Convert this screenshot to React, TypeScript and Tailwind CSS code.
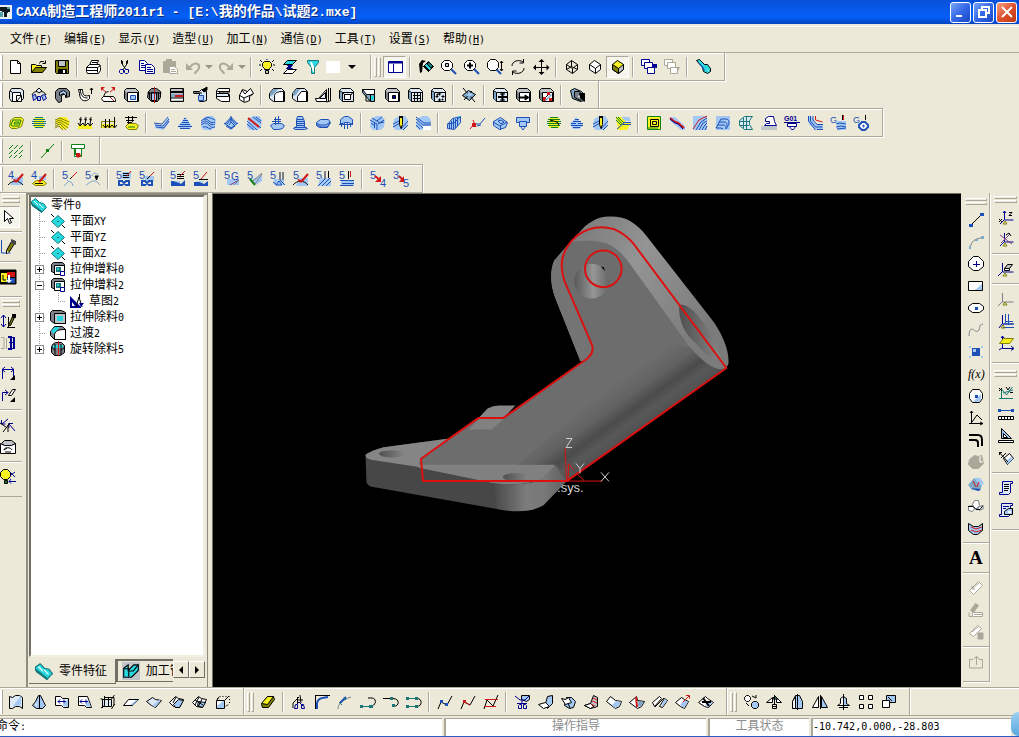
import React from "react";

/* Palette used by the compact icon notation: "<stroke><fill>[width] <path>" joined by ";". */
const INK: Record<string, string> = {
  k: "#000000", w: "#ffffff", n: "#000090", b: "#1c50b8", l: "#a4c8f4", c: "#28d8e0", t: "#187878",
  y: "#f8f020", o: "#808000", r: "#d01818", g: "#7c8088", s: "#c0c4c8", d: "#404448", e: "#108018",
  a: "#aca899", p: "#dce8f4", v: "#7fa8c8", u: "#80408c", "-": "none",
};

function Icon({ spec, className = "size-4" }: { spec: string; className?: string }) {
  return (
    <svg viewBox="0 0 16 16" className={`${className} shrink-0 overflow-visible`} aria-hidden="true">
      {spec.split(";").map((item, i) => {
        const sp = item.indexOf(" ");
        const head = item.slice(0, sp);
        const body = item.slice(sp + 1);
        if (head[0] === "T") {
          const [x, y, size, str] = body.split(" ");
          const style = head.slice(2);
          return (
            <text
              key={i} x={x} y={y} fontSize={size} fill={INK[head[1]]}
              fontFamily={style.includes("s") ? "Liberation Serif, serif" : "Liberation Sans, sans-serif"}
              fontWeight={style.includes("b") ? 700 : 400}
              fontStyle={style.includes("i") ? "italic" : "normal"}
            >
              {str}
            </text>
          );
        }
        return <path key={i} d={body} stroke={INK[head[0]]} fill={INK[head[1]]} strokeWidth={head[2] ? Number(head[2]) : 1} />;
      })}
    </svg>
  );
}

const CUBE = "ks M1.5 3.5l2-2h9l3 3v10h-11l-3-3z;-g M2 4l2 2v8l-2-2z;kw M4.5 5.5h10v9h-10z";
const CUBEP = "kp M1.5 3.5l2-2h9l3 3v10h-11l-3-3z;-v M2 4l2 2v8l-2-2z;k- M1.5 3.5l3 2h11m-11 0v9";
const FIVE = "Tb 0 8 11 5;";
const FOUR = "Tb 0 8 11 4;";
const BLOB = "-l M2 4l5-3h6l3 4-1 7-3 3H4l-3-3z;";

type Entry = [string, string] | [string, string, string] | "|";

const standard: Entry[] = [
  ["New", "kw M2.5 1.5h7l3 3v10h-10z;k- M9.5 1.5v3h3"],
  ["Open", "ky M.5 13.5v-8h4l1 1h5v3h-6z;ko M.5 13.5l4-5h11l-4 5z;k- M8.5 4.5l1-2h3l1 1m1-2v3h-3"],
  ["Save", "ko M1.5 1.5h13v13h-12l-1-1z;ks M4.5 1.5h7v6h-7z;kk M4.5 10.5h8v4h-8z;-w M9 11h2v3H9z"],
  "|",
  ["Print", "kw M4.5 6.5l2-5h7l-2 5z;kw M1.5 8.5l3-3h10l1 3v3l-2 3h-11l-1-2z;k- M1.5 8.5h11l3-2M12.5 8.5v5M1.5 11.5h11M7 3.5h5M6 5.5h5"],
  "|",
  ["Cut", "k- M5.5 1v3l4 6M11.5 1v3l-4 6M6.5 2v3M10.5 2v3;n- M4.5 10.5h3v3l-1 1h-2l-1-1v-2zM9.5 10.5h3v3l-1 1h-2l-1-1v-2z"],
  ["Copy", "nw M.5 1.5h5l3 3v7h-8z;n- M2 4.5h3M2 6.5h4M2 8.5h4;nw M6.5 5.5h6l3 3v6h-9z;n- M8 8.5h4M8 10.5h6M8 12.5h6"],
  ["Paste", "aa M1.5 2.5h12v11h-12z;-a M4 0h6v3H4z;aw M7.5 7.5h5l3 3v4h-8z;a- M9 10.5h4M9 12.5h5"],
  ["Undo", "a-2 M3 10l4-4c4-3 8-1 7 3s-4 3-4 6;-a M1 4l7 7H1z", "drop"],
  ["Redo", "a-2 M13 10l-4-4c-4-3-8-1-7 3s4 3 4 6;-a M15 4l-7 7h7z", "drop"],
  "|",
  ["Show", "ky M5.5 10.5v-1l-2-2v-3l2-2h5l2 2v3l-2 2v1z;k- M8 0v1M1 1l2 2M15 1l-2 2M0 6h2M14 6h2M1 12l2-2M15 12l-2-2;ks M6.5 11.5h3v3h-3z"],
  ["Layers", "kc M5.500 1.5h9l-4 4h-9z;nn M5.5 6.5h5l-3 3h3-6l3-3z;kw M5.5 10.5h9l-4 4h-9z"],
  ["Filter", "tc M2.5 1.5h11v2l-4 5v6h-3v-6l-4-5z;-w M5 3h2l2 5v5H8z"],
];
const view: Entry[] = [
  ["Feature tree", "nw M1.5 2.5h14v11h-14z;nn M2 3h13v1H2z;n- M6.5 5v8", "on"],
  "|",
  ["Redraw", "-k M1 5l3-4 4 1-3 2-1 9-2 1z;kc M5.5 7.5l5-5 5 5-5 5z;kk M5.5 7.5l5 5 1-1-5-5z;kt M9 5l4 4 2-2-4-4z"],
  ["Fit", "b-2 M10 10l5 5;kw M3.5 1.5h5l3 3v4l-3 3h-5l-3-3v-4z;ks M4.500 4.500h3v3h-3z"],
  ["Zoom in", "b-2 M10 10l5 5;kw M3.5 1.5h5l3 3v4l-3 3h-5l-3-3v-4z;k-2 M3 6.500h6M6 3.500v6"],
  ["Zoom", "b-2 M9 10l5 5;kw M3.5 .5h5l3 3v5l-3 3h-5l-3-3v-5z;k- M14.5 2v10M13 4l1.5-2L16 4M13 10l1.5 2 1.5-2"],
  ["Rotate", "k- M2 7c0-5 7-7 11-4M14 9c0 5-7 7-11 4M13.5 0v4h-4M2.5 16v-4h4"],
  ["Pan", "k- M8.5 1v14M1 8.5h15;-k M8.5 0l3 3h-6zM8.5 16l3-3h-6zM0 8.5l3-3v6zM16.5 8.5l-3-3v6z"],
  "|",
  ["Wireframe", "k- M2.5 5.5l5-4 6 4v5l-5 4-6-4zM2.5 5.5l6 4 5-4M8.5 9.5v5M7.5 1.5v6l-5 3M7.5 7.5l6 3"],
  ["Hidden line", "kw M2.5 5.5l5-4 6 4v5l-5 4-6-4z;k- M2.5 5.5l6 4 5-4M8.5 9.5v5"],
  ["Shaded", "ky M2.5 5.5l5-4 6 4v5l-5 4-6-4z;ko M2.5 5.5l6 4v5l-6-4z;ks M8.5 9.5l5-4v5l-5 4z", "on"],
  "|",
  ["Previous view", "nw M.5 .5h8v6h-8z;nw M3.5 3.5h8v6h-8z;nw M6.5 8.5h7v6h-7z;-n M12 5h4v4h-1l-3-1z"],
  ["Next view", "aw M.5 .5h8v6h-8z;aw M3.5 3.5h8v6h-8z;aw M6.5 8.5h7v6h-7z;-a M12 8h4l-2 4z"],
  "|",
  ["Spotlight", "kc M1.5 1.5l3-1 5 5h3l3 4v3l-3 2-4-2-1-4z;-b M3 3l6 6 1 3-3-3z;-w M11 9l3 3v1z"],
];
const features: Entry[] = [
  ["Extrude boss", "kp M1.5 4.5l2-3h9l3 2v8l-3 3h-9l-2-3z;kw M4.5 5.5h8v9h-8z;kw M8.5 8.5h5v6h-5z;k- M4 5l-2-1M9 14l4-5"],
  ["Revolve boss", "k- M1 8c1-5 13-5 14 0;kp M8 1l3 3-3 2-3-2z;nl M1.5 8.5l3-1 1 4-3 2zM6.5 9.5h3v4h-3zM10.5 8.5l3-1 2 4-3 2z"],
  ["Loft boss", "kg M1.5 4.5l3-3h8l3 3v5l-4 1v-4l-4 2v6l-3 1-3-4z;kl M5.5 5.5l4-2 3 2v4l-3-3-4 2z"],
  ["Guide loft", "kw M1.5 2.5h4c0 6 2 7 7 6v3c-3 4-10 3-10-5z;k- M3.5 3c0 5 2 8 7 8M14.5 7V1M13 3l1.500-2L16 3"],
  ["Sheet boss", "kw M1.5 11.5l2-2h10l2 3v2h-12zM3.5 9.5l2-4 3-1;r- M2 2l4 3M14 2L10 5M10 10l4 4;-r M1 0h4L1 4zM15 0h-4l4 4z"],
  ["Extrude cut", CUBE + ";bl M7.5 8.5h5v4h-5z"],
  ["Revolve cut", "kg M2.5 4.5l3-3h5l4 3v6l-3 4h-6l-4-4z;kl M5.5 5.5h5v8h-5z;r- M8.500 0v16;k- M1.500 6h14M3.500 5v7M12.500 5v7"],
  ["Loft cut", "ks M1.5 1.5h13v13h-13z;-k M2 4h12v2H2z;-v M2 7h12v3H2z;-r M6 8h8v2H6z;-w M3 11h11v2H3z;k- M1 11h13M14 2v4"],
  ["Guide cut", "kp M1.5 4.500h6l2-2 5 2v9l-3 1h-4v-8h-5l-1-1z;bl M6.500 8.500h5v5h-5z;kk M10 3l5-3v3l-3 2z;k- M1 6h9"],
  ["Sheet cut", "kw M1.500 3.500l2-2h11v3h-10v3h10v7h-8l-5-3z;kp M1.500 6.500h12v3h-12z;k- M2 4l3 1h10"],
  ["Thicken", "kw M1.500 8.500l3-6 5 2 3-3 3 5-4 3v4l-5 2-5-3z;k- M1 8l5 3 9-4M6 11v4M4 3l3 4 3-3"],
  "|",
  ["Fillet", "kp M.5 6.500l4-5h8l3 3v10h-11l-4-3z;-v M1 6l4-4h4l-5 6-3 1z;kw M5.500 8.500c1-3 3-4 9-4v10h-9z"],
  ["Chamfer", "kp M.5 6.500l4-5h8l3 3v10h-11l-4-3z;-v M1 6l4-4h3l-4 6-3 1z;kw M5.500 9.500l4-5h5v10h-9z"],
  ["Rib", "kw M.500 11.500h3l8-9v12h-10z;kp M4.500 11.500l6-6v6z;k- M13.500 1v13M15.500 1v13l-4 1"],
  ["Shell", CUBEP + ";kw M6.500 7.500h6v5h-6z;kv M4 5l3 3M15 5l-2 3"],
  ["Draft", "kv M1.500 2.500h12v12h-4l-8-9z;kw M1.500 2.500l4 5h8v-5z;k- M5 8v6h5M9.500 8v6;-c M10 9h3v4h-3z"],
  ["Hole", CUBE + ";kn M8.500 8.500h3v3h-3z"],
  ["Linear pattern", CUBEP + ";k- M6 8.500h8M6 11.500h8M7.500 6v8M10.500 6v8M13.500 6v8"],
  ["Circular pattern", CUBEP + ";kk M9 6h1v2H9zM6 9h2v1H6zM12 9h2v1h-2zM9 12h1v2H9zM7 7h1v1H7zM12 12h1v1h-1z"],
  "|",
  ["Plane", "kv M1.500 8.500l6-5 7 4-6 6z;k- M2 1l12 14M3 13l8-9;-l M8 5l4 2-3 3-4-2z"],
  "|",
  ["Cavity", CUBEP + ";k-2 M6 10h9M10.500 6v9;k- M8 7h5M8 13h5"],
  ["Parting", CUBE + ";kk M4 10h6V8l4 2.500-4 2.500v-2H4z"],
  ["Boolean", CUBE + ";k- M5 13l8-8;-r M9 5h3v3H9zM5 10h3v4H5zM11 11h3v3h-3z;-v M7 13l6-6 1 1-6 6z"],
  "|",
  ["Solid import", "kv M1.500 3.500l4-2 7 3 3 3v6l-4 1-8-3z;kg M5.500 4.500h5l3 5-2 4-6-3z;-w M9 9l3-2v2l-2 2z;-k M10 6l6 0v9l-5-4z"],
];

const stripes = (s: string) => BLOB + s;
const milling: Entry[] = [
  ["Planar rough", "oy M1.500 11.500l1-6 4-3h7l2 2-2 7-5 2h-5z;e- M3 10l2-5h8l-2 6H4zM6 9l1-2h4l-1 2z"],
  ["Region rough", "-y M3 3h10v10H3z;t- M4 2.500h8M2 4.500h12M1 6.500h14M1 8.500h14M2 10.500h12M4 12.500h8"],
  ["Contour rough", "-y M1 6l5-4h6l4 5-3 7H7z;o- M1 5l5-2 9 4M1 7l5-2 9 5M1 9l5-2 8 6M1 11l5-2 6 6M1 13l4-2 4 4"],
  ["Plunge rough", "-y M1 10h14v4H1z;k- M4 2l-1 8M9 2L8 10M14 2l-1 8M2 4l3 1M7 4l3 1M12 4l3 1M1 8l2 3 3-3M6 8l2 3 3-3M11 8l2 3 3-3"],
  ["Ramp rough", "-y M1 9h13v4H1z;o- M1.500 13V6.500h14;k- M5.500 4v9M9.500 4v8M14.500 2v10M3 10l2.500 3 2.500-3M7 10l2.500 3 2.500-3M12 10l2.500 3 2.500-3"],
  ["Cycloid rough", "oy M2.500 11.500l3-3h7l3 2-2 4h-8z;k- M2 2.500h12M3 5.500h8M4 7.500h5M5.500 1v8M9.500 1v6;e- M5 12h7"],
  "|",
  ["Parameter line", "-l M1 9l7 2 7-9v6l-6 7-8-2z;b- M0 8l8 1 6-7M1 10l8 1 6-7M2 12l8 1 5-7"],
  ["Contour finish", "-l M8 2l7 9-3 3H4l-3-3z;b- M7 3.500h2M6 5.500h5M5 7.500h7M3 9.500h10M1 11.500h14M3 13.500h10"],
  ["Scan line", stripes("b- M1 6c4-3 6-2 8 0s4 2 6 1M1 8c4-3 6-2 8 0s4 2 6 1M1 10c4-3 6-2 8 0s3 3 6 2M4 4c4-3 6-1 11 1M3 12c4-1 4 1 8 2")],
  ["Shallow plane", "-l M8 2l7 6-7 7-7-6z;b- M8 1v6M1 8l7 5 7-5M2 9l6-7 6 7M4 9l4-5 4 5M6 10l2-3 3 3M3 11l5 3 4-3"],
  ["Limit line", stripes("b- M1 9l7 6M1 6l10 9M3 4l12 9M7 2l8 6M10 2l5 4;r-2 M2 3l11 9")],
  ["Guide line", "bl M1.500 10.500l3-2h8l3 2-2 3-4 1h-5z;b- M3 6.500h9M5 4.500h7M6.500 2v8M9.500 1v8"],
  ["Contour 3D", "bl M4.500 4.500l1-3h5l2 5v5l3 2-3 1h-9l-2-1 3-2z;b- M5 4.500h6M5 6.500h7M4 8.500h8M4 10.500h8M2 12.500h12"],
  ["Region finish", "bl M1.500 7.500l4-3h8l2 3-3 5h-8l-3-2z;b- M1 8l4 2h6l4-3M2 10l4 2h6l3-4"],
  ["Profile guide", "bl M2.500 4.500l4-3h4l4 3v5l-4-2h-4l-4 2z;b- M1 9.500h14M3.500 8v4M6.500 8v6M9.500 8v6M12.500 8v4"],
  "|",
  ["Fill", stripes("b- M1 5l7 4M3 3l8 5M9 9l6-4M8 6l5-4M8 9v6M5.500 8v5M11 8l4-1M2 8l4 3")],
  ["Pencil pass", BLOB + "b- M1 9l6-3M1 12l7-4M9 14l7-8M11 15l5-5;ky M7.500 1.500h3v8l-1.500 4-1.500-4z;-k M7 1h4v2H7z"],
  ["Pencil pass two", BLOB + "b- M1 4l7 6h8M1 7l7 6h8M1 2l8 6h7M1 10l4 4;-w M8 11h8v4H8z"],
  "|",
  ["Surface contour", "bl M1.500 9.500l5-6 8-2v6l-6 7-7-1z;b- M3.500 9v5M5.500 6v8M7.500 4v10M9.500 4v9M11.500 3v8M1 9l7-1 6-6;-c M12 1h2v1h-2z"],
  ["Curve pass", "b- M5 9h6l5-6M8 11l4-1;r- M1 14l5-6M4 5l3 7;-r M3 8h4v4H3z"],
  ["Surface region", "bl M1.500 6.500l7-4 7 5-2 5-6 2-6-4z;b- M1 7l7 4 7-4M8.500 11v4M6 6l3-1 3 2-3 2z"],
  ["Groove", "bl M1.500 2.500h13v5h-13z;bl M4.500 6.500h7v5h-7z;b- M6 12l2 3 2-3"],
  "|",
  ["Rest rough", "-y M3 3h10v10H3z;e- M4 2.500h8M2 4.500h12M1 6.500h6M10 6.500h5M1 8.500h14M2 10.500h12M5 12.500h7;k- M4 5l7 2 2 3"],
  ["Rest finish", "-l M7 2l7 8-3 4H4L1 9z;b- M6 4.500h4M4 6.500h8M2 8.500h5M9 8.500h5M2 10.500h12M4 12.500h7"],
  ["Rest pencil", BLOB + "b- M1 9l6-3M1 12l7-4M9 14l7-8M11 15l5-5;ky M7.500 1.500h3v8l-1.500 4-1.500-4z;-k M7 1h4v2H7z"],
  ["Rest region", "-l M7 2h7l2 4H8z;-y M1 2h5l5 5 5 1-4 7H3z;e- M1 2l7 8M1 5l5 5M3 2l5 5;b- M8 7.500h8M8 9.500h8M2 14l8-7"],
  "|",
  ["Pocket", "ey M1.500 1.500h13v13h-13z;k- M4.500 4.500h8v7h-8zM6.500 6.500h4v3h-4z;e- M2 13h10"],
  ["Engrave", "-l M1 2h5l10 9v4h-4L1 6z;r-2 M1 3l5 4 3 1 6 5;n- M1 4l5 4 3 1 5 5"],
  ["Pattern rough", "-l M1 1h14v14H1z;r- M1 14L7 5l8-4;b- M4 15l5-8 6-4M7 15l4-7 4-2M10 15l3-5 2-2M13 15l2-4"],
  ["Multi pass", "-l M1 1h14v14H1z;b- M1 13l5-9h5c3 0 3 2 3 5l-3 5M3 10h5c3 0 3 2 3 4M4 7h5c3 0 3 2 3 4M1 13h5l2 1"],
  ["Impeller", "tp M6.500 1.500h8l-3 4v4l3 5h-8l-5-4v-5z;t- M2 6.500h9M2 10.500h9M5.500 3v10M8.500 2v13"],
  ["Blade", "-s M0 11h16v4H0z;nw M3.500 10.500l2-2h3v-2h-4v-3l3-2h5l1 5 2 4z"],
  ["G01 drill", "Tnb 0 6 7 G01;n- M0 7.500h16;nw M3.500 8.500h9v3h-9zM5.500 11.500h6l-2 3h-2z"],
  ["Channel", "-l M1 1h3l5 8h7v6H9L2 9z;b- M1.500 1v5l7 9M3.500 1v5l5 6h7M6 1v4l4 4.500h6M10 14.500h6;r- M8.500 1v4l7 2"],
  ["G wash", "Tb 0 8 9 G;-l M7 6h9v9H7z;b- M6 9l4-1 6 1M6 12l5-1 5 1M7 14l9-1;r- M13.500 0v5;k- M12.500 0v5"],
  ["G circle", "Tb 0 8 9 G;bw2 M9 7h3l3 3v2l-3 3H9l-3-3v-2z;b- M10 10h1v2h-1z;k- M12.500 0v5"],
];
const paths: Entry[] = [
  ["Trajectory", "e- M1 6l4-4M6 6l4-4M11 6l4-4M1 11l4-4M6 11l4-4M11 11l4-4M1 15l3-3M6 15l3-3M11 15l3-3"],
  "|",
  ["Point drill", "e- M2 15L15 1;-e M7 6h3v3H7z"],
  "|",
  ["Hole drill", "ew M1.500 1.500h13v4h-13zM4.500 5.500h7v8h-7z;-r M6 10h4l1 3-3 2-2-2z;e- M5.500 6v6"],
];
const fiveAxis: Entry[] = [
  ["Four-axis curve", FOUR + "-l M7 6h8v8H2z;k- M0 14c4-5 11-5 15 0;r-2 M8 11l7-8;-r M5 8l4 1-2 3z"],
  ["Four-axis flat", FOUR + "-l M8 5h7v4H8z;oy M1.500 12.500l4-3h7l3 3-3 2h-8z;k- M4 12.500h8;r-2 M8 11l7-8"],
  "|",
  ["Five-axis line", FIVE + "v- M2 15l5-5 3 2 1 3M7 11l-2-2;r- M10 6l5-5;k- M8 8l2-2"],
  ["Five-axis side", FIVE + "v- M7 5c1-4 6-4 7 1M1 14l6-4h4l4 4;kk M10 5h3l-1.500 4z"],
  "|",
  ["Five-axis impeller", FIVE + "-l M6 1h9v7H6z;k- M7 2.500h6M7 4.500h6M7 6.500h6;b-2 M3 10h3l4 4h3v-4h-3l-4 4H3z;r- M11 5l4-5"],
  ["Five-axis blade", FIVE + "-l M6 5h9v5H6z;b-2 M3 10h3l4 4h3v-4h-3l-4 4H3z;r- M9 7l6-6;k- M8 8l3-3"],
  "|",
  ["Rough blade", FIVE + "k- M7 3.500h7M7 5.500h7M7 7.500h7;-b M1 10h6l4 3 4-4v6H1z;-l M3 10h8l-2 2z;r- M10 5l5-5"],
  ["Finish blade", FIVE + "k- M6 8.500h9;-b M1 11h6l4 2 4-3v5H1z;-l M3 10h8l-2 2z;r- M8 8l6-7"],
  "|",
  ["Five-axis G", FIVE + "-l M3 8h12v6H3z;Tb 7 9 10 G;u- M6 14l9-5;g- M10 14l4-4"],
  ["Five-axis notch", FIVE + "-l M5 8l10-4v6l-6 4z;e-2 M3 8l5 6;g- M8 13l7-10M6 10l9-8"],
  ["Five-axis wheel", FIVE + "-l M4 8h10v6H4z;b- M6 14l3-4 3 4zM3 11l4 3M10 9l5 5;g-2 M10 1v8M13 1v8"],
  ["Five-axis curve", FIVE + "-l M6 7h9v8H3z;k- M0 14c4-5 11-5 15 0;r-2 M8 11l7-8;-r M4 8l5 1-2 3z"],
  ["Five-axis slant", FIVE + "-l M4 7h11v8H2z;b- M2 15l8-8M6 15l8-8M10 15l5-5;g-2 M9 0v8;k- M12.500 0v7"],
  ["Five-axis plane", FIVE + "-l M2 9h13v6H2z;b- M1 9.500h14M3 12.500h12M1 14.500h13;k- M9.500 0v8;r- M11.500 0v6"],
  "|",
  ["Five to four", FIVE + "Tb 10 16 11 4;r-2 M5 5l5 4;-r M11 5v6H5z"],
  ["Three to five", "Tb 0 8 11 3;Tb 10 16 11 5;r-2 M6 5l4 4;-r M11 5v6H6z"],
];

const surfaces: Entry[] = [
  ["Ruled surface", "kp M1.500 2.500l3 1 3-2h4l3 2v11l-3-2h-4l-3 2h-3z;-l M5 12L13 2v9z"],
  ["Revolved surface", "kl M7.500 1.500h2l3 6 2 4-3 3h-6l-4-3 3-4z;k- M8.500 2v12;w- M5 9v3"],
  ["Scan surface", "kw M1.500 2.500h5l2 2h6v9h-5l-2-2h-6z;-l M8 12l6-7v8z;n- M4 7.500h8M6 5.500l-2 2 2 2M10 5.500v4"],
  ["Guide surface", "kw M1.500 2.500h9l4 11h-5l-2-2h-6z;-l M8 12l3-6 3 7z;n- M3 7.500h8M5 5.500l-2 2 2 2M9 5.500v4"],
  ["Grid surface", "kp M2.500 5.500h9v7h-9z;k- M4.500 2v9M4 3.500h10v8M14.500 1l-3 4M14.500 10l-3 5M1 14l4-3M.500 5h2v9M8.500 4v9"],
  ["Plane surface", "kw M.500 11.500l5-6h10l-6 6z;-l M7 11l6-5h2l-5 5z"],
  ["Boundary surface", "kp M.5 7.500l6-4 3 2 6 1-6 7-4-2z;-l M6 12l7-6h2l-6 7z"],
  ["Loft surface", "kw M.5 8.500l6-6 3 2 5 1-4 8-6-1z;kl M4.500 10.500l5-5 5 1-4 7-4 0z;k- M7 3L4 9"],
  ["Mesh surface", "kw M.5 8.500l6-6 3 2 5 1-4 8-6-1z;kl M6.500 7.500l7 1-3 5-5-2z;k- M3 6l8 5M7 3L3 11M10 5l-4 8"],
  ["Solid surface", "kl M1.500 6.500h8v8h-8z;-w M2 7h6l-6 5z;k- M2.500 5v-1M4.500 2.500h1M7.500 2.500h1M10.500 2.500h1M13.500 2.500h1M14.500 5v1M14.500 8v1M13 10.500l-2 2M2 6l2-3M10 6l4-4"],
];
const curveEdit: Entry[] = [
  ["Delete", "ko M1.500 10.500l6-8h6l1 3-6 8h-6z;ky M1.500 9.500l6-7h6l-6 8z"],
  "|",
  ["Trim curve", "n- M8 8l-3 3M8 8l4 4M4.500 10.500h2v4h-3zM10.500 10.500h2l1 4h-3z;k- M2 14V9l6-6M6 6h6M6.500 3v7M9 1l1 8"],
  ["Fillet curve", "b-2 M3 15V9c1-4 3-5 11-6;k- M1.500 1v14M1 1.500h15"],
  ["Break curve", "g- M1 15c0-5 4-9 13-12;b-2 M3 9l6-6;t- M2 8l3 3M7 3l2 3"],
  ["Extend", "t- M0 12.500h11;k- M12 12c5-2 4-8 0-8H8;-t M0 11h3v3H0zM9 11h4v3H9z"],
  ["Extend curve", "k- M0 4.500h8M10 4.500c7 0 7 8 0 8;-t M7 3h3v3H7zM9 10h3v3H9z"],
  ["Combine", "t- M1 4.500h10M1 12.500h10;k- M11 4.500c6 0 5 8 0 8;-t M0 3h3v3H0zM0 11h3v3H0zM9 11h3v3H9zM9 3h3v3H9z"],
  "|",
  ["Edit points", "k- M1 15l3-7 6 3 5-9;-b M3 6h3v3H3zM8 9h3v3H8z"],
  ["Edit tangent", "k- M1 15l3-7 6 3 5-9;-r M3 6h3v3H3z;r- M5 8l5 3"],
  ["Edit curve", "k- M1 15l3-9 6 6 5-11;r- M2 5.500h13M1 12.500h12"],
  "|",
  ["Trim surface", "kl M7.500 1.500h8v4l-3 2-5-2z;n- M1 2l5 4h5l4-4M8 6v4;n- M5.500 10.500h2v4h-3v-3zM9.500 10.500h2l1 1v3h-3z;n- M3 9.500h10"],
  ["Extend surface", "kl M8.500 9.500l2-7 5-1v8l-5 5z;kw M1.500 10.500l7-2 4 4-6 2z"],
  ["Fillet surface", "kl M6.500 3.500h5l4 4-2 6-4 1-5-3z;kw M1.500 4.500l4 6 6-2-3-5-3 2z;k- M8 9l2 5"],
  ["Split surface", "ks M1.500 11.500l6-2 3-8 4 2v9l-7 2z;kw M1.500 11.500l6-2 3 3-3 2z;r- M9 7l5 2M10 4l4 2M8 10l4 2"],
  ["Stitch surface", "kw M.5 7.500l4-5 5 4 6 1-2 5-4 2z;-l M6 11l4-4 5 1-2 4-4 2z"],
  ["Stitch edge", "kw M.5 8.500l7-6 1 4 7 1-3 5-4 2z;-v M8 13l1-6 6 1-3 4z;r-2 M7 3l1 10"],
  ["Splice", "kw M.5 8.500l7-6 2 2-7 8zM7.500 12.500l5-8 3 2-5 7z;-l M9 11l4-6 2 2-4 5z;k- M3 13l9-9"],
  ["Offset surface", "kw M.5 8.500l6-5 3 2 4 2-4 7-4-2z;-l M5 11l4-5 4 2-4 6z;r- M8 8l6-6M11 1.500h3.500v3"],
  ["Merge surface", "kw M.5 8.500l7-6 2 2 6 4-5 5-4-1z;-l M7 12l4-5 4 2-5 4z;k-2 M5 4l6 8M4 8h9"],
];
const geometry: Entry[] = [
  ["Move", "kw M1.500 3.500l2-2h2l2 2v2l-2 2h-2l-2-2z;kl M8.500 9.500l2-2h3l2 2v3l-2 2h-3l-2-2z;k- M9 2l4 2v-3M3 9l3 3"],
  ["Rotate plane", "kw M.500 8.500l6-5v5zM15.500 8.500l-5-5v5z;kt M6 5l3-3 3 3z;k- M8.500 1v9M6.500 10.500h4v4h-4zM7 12.500h3"],
  ["Rotate", "kl M6.500 1.500h4l3 6v7h-10v-7z;kw M6.500 2.500v12h-3v-7z;k- M8.500 0v16"],
  ["Mirror plane", "kw M.500 13.500l6-11v11z;kl M9.500 2.500v11h6z;k- M8.500 1v14"],
  ["Mirror", "kw M2.500 11.500l3-2v-5l3-2v9z;kl M8.500 2.500l3 2v5l3 2h-6z;k- M8.500 0v16M4 13.500h9"],
  ["Array", "kw M1.500 1.500h4v4h-4zM10.500 1.500h4v4h-4zM1.500 10.500h4v4h-4zM10.500 10.500h4v4h-4z"],
  ["Scale", "kl M5.500 1.500h9v7h-9z;kw M1.500 6.500h7v7h-7z;k- M7 3l4 4"],
];

const leftTop: Entry[] = [
  ["Select", "kw M4.500 1.500v11l3-3 2 5 2-1-2-4h4z", "on"],
  "|",
  ["Sketch", "b- M1.500 1v13h9;ko M6.500 11.500l5-9 3 2-5 8-3 2z;-d M11 0l5 2v4l-5-2z;-w M7 12l2 1-2 1z"],
  "|",
  ["Exit sketch", "kk M0 1h16v14H0z;-y M1 4h6v9H1z;-r M7 3h8v5H7z;-b M7 9h8v5H7z;-w M8 6h2v5h2l-3 3-3-3h2z;k- M3 6v5h3"],
];
const leftBottom: Entry[] = [
  ["Vertical dimension", "n- M3.500 2v12M1 5l2.500-3L6 5M1 11l2.500 3L6 11;k- M8.500 4v10M7 14.500h8;ko M8.500 12.500l4-9 2 1-4 8z;-k M12 1h4v4h-4z"],
  ["Drive dimension", "a- M1 2.500h3v11H1M6.500 3v11;n-2 M8 2h3v12H8M14 2v12;n- M9 7.500h6M9 2.500h6M9 13.500h6"],
  "|",
  ["Horizontal dimension", "n- M2.500 14V4M13.500 13V4M2 4.500h12M5 2L2 4.500 5 7M11 2l3 2.500L11 7;-k M15 10v5h-5z"],
  ["Dimension edit", "n- M2.500 14V5.500h6M5 3l3 2.500L5 8;kw M8.500 8.500l4-6h3l-4 6z;-k M15 10v5h-5z"],
  "|",
  ["Drive point", "n- M2 7l6-5M9 7l6 7M1.500 3v4h4M9 11l-.5-4.500H13;k- M0 6l6 4M10 6L3 15M8 8v7"],
  ["Drive solid", "ks M1.500 4.500l3-3h7l4 3-4 2h-7z;kw M.500 4.500v10h15v-10l-4 2h-7z;k- M4 11c0-3 7-3 8 0M4 11l3-2M5 13h6"],
  "|",
  ["Visibility", "ky M3.500 10.500l-3-3v-4l3-3h4l3 3v4l-3 3z;ke M4.500 11.500h3v3h-3z;n- M10 3l5 5M15 3l-4 3M9 12.500h7M11 10l-2 2.500 2 2"],
];

const curves: Entry[] = [
  ["Line", "k- M3 13L13 3;-b M1 12h4v3H1zM12 1h4v3h-4z"],
  ["Arc", "g- M2 14c1-6 5-10 12-10;-v M7 5h3v2H7zM13 2h3v3h-3zM1 12h2v3H1z"],
  ["Circle", "kw M5.500 .500h5l5 5v5l-5 4h-5l-5-4v-5z;n- M8.500 5v6M5 8.500h7"],
  ["Rectangle", "kw M.500 3.500h14v9h-14z;-l M7 12l7-6v6z"],
  ["Ellipse", "kw M4.500 3.500h7l4 3v3l-4 3h-7l-4-3v-3z;-b M7 7h3v3H7z"],
  ["Spline", "g- M1 14c1-14 6-2 9-5s0-6 5-7"],
  ["Point", "-b M4 4h8v8H4z;-l M1 2h2v2H1zM13 2h2v2h-2zM1 12h2v2H1zM13 12h2v2h-2zM5 5h3v3H5z"],
  ["Formula curve", "Tksi 0 12 12 f(x)"],
  ["Polygon", "kw M4.500 1.500h7l3 4v5l-3 4h-7l-3-4v-5z;-l M5 14l8-8v5l-2 3z;-b M7 7h3v3H7z"],
  ["Quadratic curve", "k- M3.500 1v13M2 3l1.500-2L5 3M1 13.500h14M12 12l3 1.500L12 15M4 12l5-7 5 5"],
  ["Equidistant", "k-2 M1 3h9c3 0 4 2 4 5v6M1 8h6c2 0 3 1 3 3v4"],
  ["Projection", "aa M1.500 5.500l5-4 4 1 3-1 2 8-5 5h-6l-4-4z;w- M12 2v6h3"],
  ["Intersection", "-v M0 9l6-7 9 4-3 9-8-1z;-l M6 2h6l4 5-3 3z;-b M3 12l10 1-3 2z;r- M5 5l3 6M11 6l-2 5"],
  ["Image curve", "gw M.500 8.500l4-1 2 3-2 3-4-1zM4.500 6.500l2-4h4l1 5-2 3h-3zM9.500 9.500l5-2 1 3-4 2z;k- M0 8.500h5l3 3h4l3-4"],
  ["Entity boundary", "kl M.500 3.500l5 3h5l4-3v7l-5 4h-4l-5-4z;r- M3 7l5 2 6-2M3 10l5 2 6-2"],
  "|",
  ["Text", "Tksb 1 14 19 A"],
  "|",
  ["Dimension", "aw M1.500 10.500l9-9 4 4-9 9z;a- M4 9l7-6M4 6v3h3"],
  ["Dimension drive", "aa M2.500 8.500l5-7 3 2-5 7z;aw M4.500 10.500h10v4h-10z;a- M1 10.500v4h3M6 12.500h8"],
  ["Dimension check", "aw M1.500 9.500l8-8 4 3-8 8z;aa M10 9h5v6h-5z;a- M4 8l6-5"],
  "|",
  ["Sketch closure", "a- M1.500 5v9h13V5M1 5.500h4M11 5.500h4M8.500 3v8M6 5l2.500-3L11 5"],
];
const coordA: Entry[] = [
  ["Create coordinate system", "n- M6.500 2v9h9M6 11l-4 4M5 4l1.500-2L8 4;k- M1 10l3 3M4 10l-3 3M11 3.500h3l-3 3h3;o- M7 12l2 3H5z"],
  ["Activate system", "n- M6.500 2v9h9M6 11l-4 4;u- M2 4l12 9M3 12l9-9;k- M8 4l3-2 2 3;o- M7 12l2 3H5z"],
  "|",
  ["Delete system", "n- M4.500 2v9h11M4 11l-4 4;ks M6.500 7.500l3-4h5l-3 4z;kw M6.500 7.500h5v2h-5z;o- M7 12l2 3H5z"],
  "|",
  ["Hide system", "g- M4.500 2v9h11M4 11l-4 4;o- M7 11l2 3H5z"],
  ["Show all systems", "n- M4.500 2v9h11M4 11l-3 4;b- M7.500 1v9M10.500 1v11M5 11h11M7 8.500h8M5 14.500h11;o- M5 12l2 3H3z"],
  ["Work plane", "n- M4.500 1v12.500h11M13 11l3 2.500-3 2M4 13l-3 2M3 3l1.500-2L6 3;oy M5.500 3.500h10l-4 5h-10z"],
];
const coordB: Entry[] = [
  ["Coordinate query", "t- M3.500 14V5l5 6 6-8M1 14.500h14M5 9l10-3;k- M1 4l3 3M4 4L1 7M12 8.500h3M8 3l2 3 2-3"],
  ["Distance query", "b- M1 4.500h14;-b M0 3h3v3H0zM13 3h3v3h-3z;kw M.5 10.500h15v3h-15z;k- M3.500 11v2M6.500 11v2M9.500 11v2M12.500 11v2"],
  ["Angle query", "kl M3.500 .500l10 10h-10z;kw M5.500 5.500l4 4h-4z;kw M.500 12.500h15v2h-15z"],
  ["Property query", "kw M5.500 8.500l6-5 4 5-6 6z;-l M8 11l5-4 2 2-5 5z;k- M1 2l9 10M3 8l5-5M1 2.500h3M1.500 2v3"],
  "|",
  ["List", "np M4.500 1.500h10v2h-2v9l-2 2h-9v-2h3z;k- M6 4.500h5M6 6.500h5M6 8.500h5M6 10.500h4"],
  ["List query", "np M3.500 1.500h11v2h-2v9l-2 2h-9v-2h2z;n- M5 4.500h6M5 6.500h3;kl M6.500 9.500l4-3h4v6h-8z;-w M10 9h3v2h-3z"],
];

function Tool({ entry, side }: { entry: Entry; side?: boolean }) {
  if (entry === "|")
    return side ? (
      <div className="flex h-2 w-full items-center"><i className="h-0.5 w-full border-t border-[#aca899] bg-white" /></div>
    ) : (
      <div className="flex w-2 justify-center"><i className="h-5 w-0.5 border-l border-[#aca899] bg-white" /></div>
    );
  const [label, spec, mode] = entry;
  return (
    <>
      <button
        aria-label={label}
        title={label}
        className={`grid shrink-0 place-items-center ${side ? "h-[22px] w-6" : "h-[22px] w-[23px]"} ${
          mode === "on" ? "border border-t-[#aca899] border-l-[#aca899] border-r-white border-b-white bg-[#f6f5ee]" : ""
        }`}
      >
        <Icon spec={spec} />
      </button>
      {mode === "drop" && (
        <button aria-label={`${label} list`} className="grid w-2.5 place-items-center">
          <i className="border-x-4 border-t-4 border-x-transparent border-t-[#9a978a]" />
        </button>
      )}
    </>
  );
}

const Tools = ({ items, side }: { items: Entry[]; side?: boolean }) => (
  <>
    {items.map((e, i) => <Tool key={i} entry={e} side={side} />)}
  </>
);

const Grip = () => (
  <div className="flex items-center gap-px px-0.5">
    <i className="h-5 w-[3px] border border-white border-r-[#aca899] border-b-[#aca899]" />
    <i className="h-5 w-[3px] border border-white border-r-[#aca899] border-b-[#aca899]" />
  </div>
);
const SideGrip = ({ className = "" }: { className?: string }) => (
  <div className={`flex w-full flex-col justify-center gap-px px-0.5 ${className}`}>
    <i className="h-[3px] border border-white border-r-[#aca899] border-b-[#aca899]" />
    <i className="h-[3px] border border-white border-r-[#aca899] border-b-[#aca899]" />
  </div>
);

function Bar({ children }: { children: React.ReactNode }) {
  return (
    <div role="toolbar" className="-mt-px flex h-[29px] w-fit items-center border-y border-r border-[#aca899] pr-2.5 shadow-[inset_0_1px_0_#fff,1px_1px_0_#fff]">
      <i className="mr-px h-6 w-[3px] border-r border-[#aca899] bg-white" />
      {children}
    </div>
  );
}

const Lat = ({ children }: { children: React.ReactNode }) => (
  <span className="font-['DejaVu_Sans_Mono',monospace] text-[10px]">{children}</span>
);

const menus: [string, string][] = [
  ["文件", "F"], ["编辑", "E"], ["显示", "V"], ["造型", "U"], ["加工", "N"], ["通信", "D"], ["工具", "T"], ["设置", "S"], ["帮助", "H"],
];

const PLANE = "tc M1.500 8.500l6.500-6 6.500 6-6.500 6z;k- M1 1l3 3M12 12l3 3;-t M7 8h2v1H7z";
const EXTRUDE = "kg M1.500 3.500l2-2h9l2 2v9h-9l-4-2z;kw M4.500 4.500h10v9h-10z;-t M6 6h5v5H6z;-c M7 7h2v2H7z;nw M10.500 10.500h4v4h-4z";
const PART = "tc M.500 4.500l4-3 4 4 4 1 3 4-5 5-10-8z;-t M1 6l10 8v2L1 9z;w- M3 4l4 4M8 7l4 4";
type Row = { zh: string; en: string; icon: string; box?: "+" | "-"; child?: boolean; last?: boolean };
const rows: Row[] = [
  { zh: "平面", en: "XY", icon: PLANE },
  { zh: "平面", en: "YZ", icon: PLANE },
  { zh: "平面", en: "XZ", icon: PLANE },
  { zh: "拉伸增料", en: "0", icon: EXTRUDE, box: "+" },
  { zh: "拉伸增料", en: "2", icon: EXTRUDE, box: "-" },
  { zh: "草图", en: "2", icon: "-n M1 3l11 11v1H1z;-w M3 9l3 4H3z;k- M7 14l3-10 3 10M10.500 1v5;-n M10 10h5l-3 4z", child: true },
  { zh: "拉伸除料", en: "0", icon: "kg M.500 3.500l2-2h9l4 2v11h-11l-4-3z;ks M4.500 4.500h11v10h-11z;-c M7 7h6v5H7z", box: "+" },
  { zh: "过渡", en: "2", icon: "kg M.500 6.500l4-5h8l3 3v10h-11l-4-4z;-c M1 6l4-4h5L4 9z;kw M4.500 9.500c1-4 4-5 11-5v10h-11z" },
  { zh: "旋转除料", en: "5", icon: "kg M2.500 3.500l3-2h6l3 3v7l-4 3h-6l-3-3v-5z;-c M3 4h10v3H3z;k- M1 6l4 3v5M15 6l-4 3v5M5 3v6M11 3v6;r- M8.500 0v15", box: "+", last: true },
];

function FeatureTree() {
  return (
    <ul role="tree" className="flex-1 border-2 border-[#716f64] border-r-[#f1efe2] border-b-[#f1efe2] bg-white text-[12px] leading-4">
      <li role="treeitem" className="flex h-4 items-center gap-1"><Icon spec={PART} /><span>零件<Lat>0</Lat></span></li>
      {rows.map((r, i) => (
        <li key={i} role="treeitem" className="flex h-4 items-center gap-1">
          <svg className={`h-4 shrink-0 ${r.child ? "w-[34px]" : "w-[15px]"}`} shapeRendering="crispEdges" aria-hidden="true">
            <path d={`M8.500 0V${r.last ? 8 : 16}`} stroke="#a0a0a0" strokeDasharray="1 1" />
            <path d={r.child ? "M27.500 0v8.500h7" : "M8.500 8.500h7"} fill="none" stroke="#a0a0a0" strokeDasharray="1 1" />
            {r.box && <path d="M4.500 4.500h8v8h-8z" fill="#fff" stroke="#8c8c8c" />}
            {r.box && <path d={r.box === "+" ? "M6 8.500h5M8.500 6v5" : "M6 8.500h5"} stroke="#000" />}
          </svg>
          <Icon spec={r.icon} />
          <span className="whitespace-nowrap">{r.zh}<Lat>{r.en}</Lat></span>
        </li>
      ))}
    </ul>
  );
}

function Model() {
  return (
    <svg viewBox="213 193 748 494" className="absolute inset-0 size-full" role="img" aria-label="Part view">
      <defs>
        <linearGradient id="fold" gradientUnits="userSpaceOnUse" x1="800" y1="545" x2="892" y2="674">
          <stop offset="0" stopColor="#6d6d6d" /><stop offset=".35" stopColor="#626262" /><stop offset=".6" stopColor="#4b4b4b" /><stop offset=".78" stopColor="#585858" /><stop offset="1" stopColor="#505050" />
        </linearGradient>
        <linearGradient id="corner"><stop offset="0" stopColor="#484848" /><stop offset=".45" stopColor="#7c7c7c" /><stop offset=".7" stopColor="#787878" /><stop offset="1" stopColor="#606060" /></linearGradient>
        <linearGradient id="bore"><stop offset="0" stopColor="#585858" /><stop offset=".55" stopColor="#969696" /><stop offset="1" stopColor="#666" /></linearGradient>
        <linearGradient id="rim" x1="0" y1="0" x2="1" y2=".5"><stop offset="0" stopColor="#727272" /><stop offset=".5" stopColor="#949494" /><stop offset="1" stopColor="#7b7b7b" /></linearGradient>
        <linearGradient id="slot"><stop offset="0" stopColor="#505050" /><stop offset="1" stopColor="#858585" /></linearGradient>
      </defs>
      <g transform="translate(350 200) scale(.33333)">
        <path d="M45 763Q62 750 100 740L280 716 420 700 650 842 580 915Q540 940 440 926L60 858Q48 852 48 842Z" fill="#474747" />
        <path d="M45 763Q62 750 100 740L280 716 460 690 640 795 615 793 575 835Q520 858 430 848L205 800 62 778Q46 775 45 763Z" fill="#858585" />
        <path d="M430 848Q535 860 575 835L615 793 650 842 580 915Q530 944 440 926Z" fill="url(#corner)" />
        <path d="M385 652L412 624Q430 614 450 615H496L460 652 440 690 360 690Z" fill="#858585" />
        <path d="M692 482L615 290C600 250 600 210 612 180L655 130 705 76C740 50 755 47 785 47 825 47 855 62 890 105L1085 355C1120 400 1140 455 1136 490L1126 508 1100 506 1000 480 760 260Z" fill="url(#rim)" />
        <path d="M691 482L615 290C600 250 600 210 612 180L650 135 690 300 740 440 712 480Z" fill="#747474" />
        <path d="M660 126C690 116 750 118 780 132 800 142 815 157 835 182L1020 440Q1080 508 1115 506L1130 500 650 842 615 793H205L212 775 385 652H460L710 475Q735 455 725 430L640 235Q630 165 660 126Z" fill="#6d6d6d" />
        <path d="M1020 440Q1080 508 1115 506L1130 502 650 842 618 793H500L800 545 960 430Z" fill="url(#fold)" />
        <path d="M205 795H615L575 835Q520 858 430 848L205 802Z" fill="#808080" />
        <path d="M355 687L387 655H460L425 687Z" fill="#818181" />
        <path d="M988 312Q1010 305 1045 345 1100 410 1112 472 1080 482 1040 430 985 385 988 312Z" fill="url(#slot)" />
        <ellipse cx="725" cy="241" rx="52" ry="52" fill="url(#bore)" />
        <path d="M753 197L765 211 762 199Z" fill="#000" />
        <ellipse cx="125" cy="760" rx="39" ry="11" fill="url(#slot)" />
        <ellipse cx="497" cy="830" rx="39" ry="12" fill="url(#slot)" />
        <g fill="none" stroke="#dc1010" strokeWidth="6" strokeLinejoin="round">
          <path d="M212 775L385 652H460L710 475Q735 455 725 430L643 240Q616 160 680 105 730 68 790 84 826 98 852 130L1130 502 650 842H218Z" />
          <circle cx="760" cy="204" r="55" />
          <path d="M645 742L650 842H757M654 842L656 790 672 810M680 820L702 840" strokeWidth="3" />
        </g>
      </g>
      <g fill="none" stroke="#d0d0d0" strokeWidth="1">
        <path d="M566 438h6l-6 9h6M576 463l4 5 4-5M580 468v5M601 472l8 9M609 472l-8 9" />
      </g>
      <text x="557" y="492" fontSize="13" fill="#d0d0d0" fontFamily="Liberation Sans, sans-serif">.sys.</text>
    </svg>
  );
}

function CaptionButton({ label, d, close }: { label: string; d: string; close?: boolean }) {
  return (
    <button aria-label={label} className={`grid size-[21px] place-items-center rounded-[3px] border border-white ${close ? "bg-linear-to-br from-[#f0a080] via-[#e0502c] to-[#c03810]" : "bg-linear-to-br from-[#7ca4f4] via-[#3468e8] to-[#1c48c4]"}`}>
      <svg viewBox="0 0 16 16" className="size-4" aria-hidden="true"><path d={d} fill="none" stroke="#fff" strokeWidth="2" /></svg>
    </button>
  );
}

export default function App() {
  return (
    <div className="flex min-h-screen flex-col overflow-hidden bg-[#ece9d8] font-['Liberation_Sans','Noto_Sans_CJK_SC',sans-serif] text-[12px] text-black">
      <header className="flex h-6 items-center justify-between bg-linear-to-b from-[#0a50d8] via-[#0460f8] via-70% to-[#0444c0] pr-0.5 text-white">
        <div className="flex items-center gap-1">
          <svg viewBox="0 0 14 16" className="h-4 w-3" shapeRendering="crispEdges" aria-hidden="true">
            <path d="M0 0h14v16H0z" fill="#e8f0f0" /><path d="M0 2h12v5L8 10v4H5V9L0 6z" fill="#101820" /><path d="M8 2h4v3H8zM0 8h3v6H0z" fill="#50a0a8" />
          </svg>
          <h1 className="whitespace-pre font-['Liberation_Mono','Noto_Sans_CJK_SC',monospace] text-[13px] leading-5 font-bold [text-shadow:1px_1px_0_#0a2a80]">
            CAXA<span className="text-[14px]">制造工程师</span>2011r1 - [E:\<span className="text-[14px]">我的作品</span>\<span className="text-[14px]">试题</span>2.mxe]
          </h1>
        </div>
        <div className="flex gap-0.5">
          <CaptionButton label="Minimize" d="M3 12h6" />
          <CaptionButton label="Restore" d="M6 5V3h7v6h-2M3 6h7v7H3z" />
          <CaptionButton label="Close" d="M3 3l10 10M13 3L3 13" close />
        </div>
      </header>

      <nav className="mt-0.5 flex h-[26px] items-center gap-3 border-t border-white pl-2.5">
        {menus.map(([zh, key]) => (
          <button key={key} className="whitespace-nowrap leading-4">{zh}<Lat>(<u>{key}</u>)</Lat></button>
        ))}
      </nav>

      <div className="border-t border-[#aca899]">
        <Bar>
          <Tools items={standard} />
          <i className="ml-0.5 h-3 w-3.5 bg-white" />
          <button aria-label="Colour list" className="grid w-6 place-items-center"><i className="border-x-4 border-t-4 border-x-transparent border-t-black" /></button>
          <i className="ml-1.5 h-6 w-0.5 border-l border-[#aca899] bg-white" />
          <Grip />
          <Tools items={view} />
        </Bar>
        <Bar><Tools items={features} /></Bar>
        <Bar><Tools items={milling} /></Bar>
        <Bar><Tools items={paths} /></Bar>
        <Bar><Tools items={fiveAxis} /></Bar>
      </div>

      <main className="flex flex-1">
        <aside className="w-[26px] shrink-0 overflow-hidden">
          <div className="w-[22px]">
            <SideGrip className="h-[13px]" />
            <div className="-ml-1 flex flex-col items-start"><Tools items={leftTop} side /></div>
            <div className="mt-2 border-t border-[#aca899] shadow-[inset_0_1px_0_#fff]"><SideGrip className="h-[13px]" /></div>
            <div className="-ml-1 flex flex-col items-start border-b border-[#aca899] pb-2"><Tools items={leftBottom} side /></div>
          </div>
        </aside>

        <section className="flex w-[182px] shrink-0 flex-col border-t-2 border-r border-l-2 border-[#8f8c80] pr-0.5 pl-px">
          <FeatureTree />
          <div className="mt-0.5 flex h-[28px] items-start">
            <button className="flex h-[25px] w-[88px] items-center gap-1.5 border-r border-b border-[#716f64] pl-1.5 text-[12px]">
              <Icon spec={PART} className="size-[18px]" /><span className="whitespace-nowrap">零件特征</span>
            </button>
            <button className="flex h-[23px] w-[58px] items-center gap-1.5 overflow-hidden border-2 border-r-0 border-b border-[#716f64] pl-1 text-[12px]">
              <Icon spec="-s M0 0h16v16H0z;kc M1.500 5.500l4-3v5l5-5h4v5l-6 6h-7z;k- M2 6h4v7M6 8h4l4-5" className="size-[18px]" />
              <span className="whitespace-nowrap">加工管理</span>
            </button>
            <div className="mt-0.5 flex">
              <button aria-label="Scroll tabs left" className="grid h-[17px] w-4 place-items-center border border-white border-r-[#716f64] border-b-[#716f64]"><i className="border-y-4 border-r-4 border-y-transparent border-r-black" /></button>
              <button aria-label="Scroll tabs right" className="grid h-[17px] w-4 place-items-center border border-white border-r-[#716f64] border-b-[#716f64]"><i className="border-y-4 border-l-4 border-y-transparent border-l-black" /></button>
            </div>
          </div>
        </section>

        <section className="relative ml-1 flex-1 border-t border-l border-[#716f64] bg-black"><Model /></section>

        <aside className="ml-0.5 flex shrink-0 items-start">
          <div className="flex w-[27px] flex-col items-center border-r border-b border-[#aca899] pb-2 shadow-[1px_1px_0_#fff]">
            <SideGrip className="h-4" />
            <Tools items={curves} side />
          </div>
          <div className="ml-0.5 w-[27px]">
            <div className="flex flex-col items-center border-b border-[#aca899] pb-2 shadow-[0_1px_0_#fff]">
              <SideGrip className="h-[13px]" />
              <Tools items={coordA} side />
            </div>
            <div className="mt-0.5 flex flex-col items-center border-b border-[#aca899] pb-2 shadow-[0_1px_0_#fff]">
              <SideGrip className="h-4" />
              <Tools items={coordB} side />
            </div>
          </div>
        </aside>
      </main>

      <div role="toolbar" className="flex h-[29px] items-center border-y border-[#aca899] shadow-[inset_0_1px_0_#fff]">
        <i className="mr-px h-6 w-[3px] border-r border-[#aca899] bg-white" />
        <Tools items={surfaces} />
        <i className="ml-[9px] h-[27px] w-0.5 border-l border-[#aca899] bg-white" />
        <Grip />
        <Tools items={curveEdit} />
        <i className="ml-[9px] h-[27px] w-0.5 border-l border-[#aca899] bg-white" />
        <Grip />
        <Tools items={geometry} />
        <i className="ml-[9px] h-[27px] w-0.5 border-l border-[#aca899] bg-white" />
      </div>

      <footer className="relative mt-0.5 flex h-[19px] gap-0.5 border-b border-[#2c5cc0] leading-[14px]">
        <div className="flex-1 overflow-hidden border-t border-[#aca899] bg-white"><span className="-ml-1">命令<Lat>:</Lat></span></div>
        <div className="w-[262px] border-t border-l-2 border-[#aca899] bg-white text-center text-[#8c8c8c]">操作指导</div>
        <div className="w-[101px] border-t border-l-2 border-[#aca899] bg-white text-center text-[#8c8c8c]">工具状态</div>
        <div className="mr-2 w-[200px] border-t border-l-2 border-[#aca899] bg-white"><Lat>-10.742,0.000,-28.803</Lat></div>
        <i className="absolute right-0 bottom-0 h-6 w-2 rounded-l-full bg-linear-to-b from-[#9cd0f0] to-[#58a8e0]" />
      </footer>
    </div>
  );
}
